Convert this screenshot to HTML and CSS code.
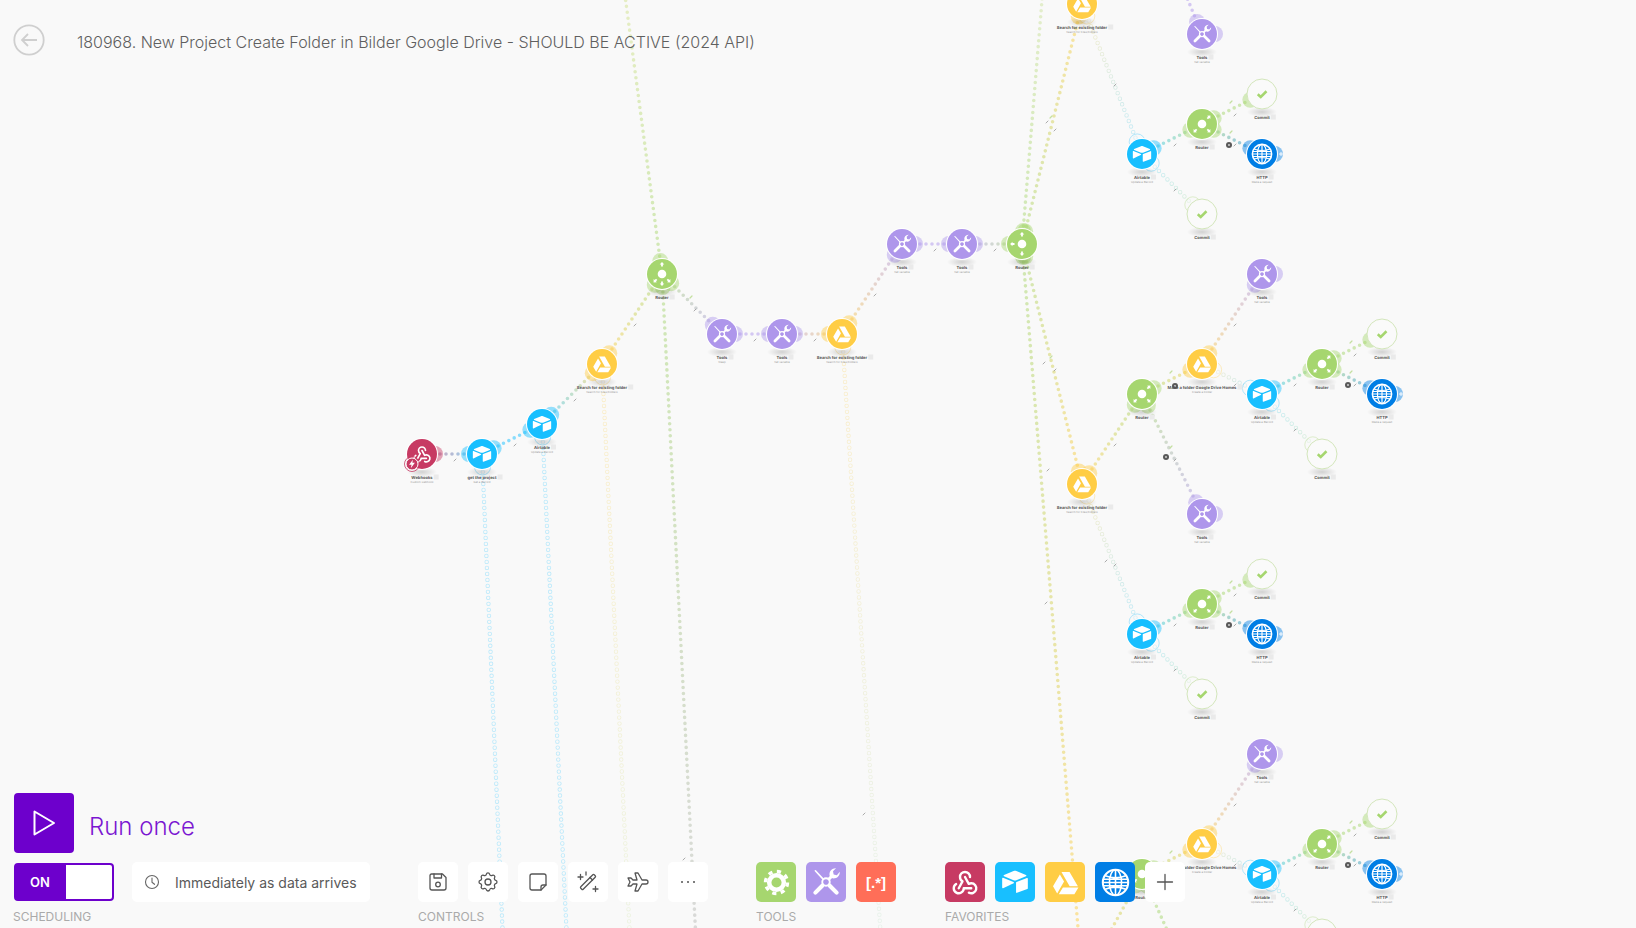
FILE: index.html
```html
<!DOCTYPE html>
<html lang="en">
<head>
    <meta charset="UTF-8">
    <meta name="viewport" content="width=device-width, initial-scale=1.0">
    <title>Scenario editor</title>
    <link rel="stylesheet" href="styles.css">
</head>
<body>
    <svg class="sprites" aria-hidden="true">
        <defs>
            <radialGradient id="shadow">
                <stop offset="0" stop-color="#000" stop-opacity="0.16"></stop>
                <stop offset="1" stop-color="#000" stop-opacity="0"></stop>
            </radialGradient>
            <symbol id="i-drive" viewBox="0 0 24 24">
                <path fill="currentColor" d="M8.4 2.6h7.2L23 15.4h-7.3zM7 4.9.9 15.4l3.7 6.3 6.1-10.5zM9.7 16.4l-3.7 6h13.9l3.6-6z"></path>
            </symbol>
            <symbol id="i-airtable" viewBox="0 0 24 24">
                <path fill="currentColor" d="M10.8 2.6 2.6 6c-.5.2-.5.9 0 1.1l8.2 3.3c.8.3 1.6.3 2.4 0l8.2-3.3c.5-.2.5-.9 0-1.1l-8.2-3.4c-.8-.3-1.6-.3-2.4 0z"></path>
                <path fill="currentColor" d="M12.9 12.6v8.2c0 .4.4.7.8.5l8.9-3.4c.3-.1.4-.3.4-.6V9.1c0-.4-.4-.7-.8-.5l-8.9 3.4c-.2.1-.4.4-.4.6z"></path>
                <path fill="currentColor" d="M10.9 13 8 14.400l-.3.1-5.900 2.800c-.4.2-.8-.1-.8-.5V8.900c0-.2.1-.3.2-.4l.2-.1c.1-.1.3-.1.4 0l8.900 3.500c.4.200.5.800.2 1.100z"></path>
            </symbol>
            <symbol id="i-webhook" viewBox="0 0 24 24">
                <g fill="none" stroke="currentColor" stroke-width="1.9" stroke-linecap="round" stroke-linejoin="round">
                    <path d="M4.900 13.600a4 4 0 1 0 6.100 3.400h6"></path>
                    <path d="M15.100 20.500a4 4 0 1 0 1.900-7.500c-.7 0-1.400.2-2 .5l-3-5.500"></path>
                    <path d="M16 8a4 4 0 1 0-8 0c0 1.500.8 2.800 2 3.500l-3 5.500"></path>
                </g>
            </symbol>
            <symbol id="i-tools" viewBox="0 0 24 24">
                <g fill="none" stroke="currentColor" stroke-linecap="round">
                    <path stroke-width="1.300" d="M3.500 3 9.500 9.500"></path>
                    <path stroke-width="3.300" d="M14.800 14.800 20.500 20.500M9.200 14.800 3.500 20.500"></path>
                    <path stroke-width="2.400" d="M14.500 9.500 17 7"></path>
                    <circle stroke-width="1.500" cx="12" cy="12" r="3"></circle>
                </g>
                <path fill="currentColor" d="M23 3.800a4.800 4.800 0 0 1-6.500 5L15 7.300a4.800 4.800 0 0 1 5-6.300l-2.400 2.400.5 2.600 2.600.5z"></path>
            </symbol>
            <symbol id="i-gear" viewBox="0 0 24 24">
                <g fill="none" stroke="currentColor">
                    <circle stroke-width="4" cx="12" cy="12" r="6.500"></circle>
                    <circle stroke-width="3" cx="12" cy="12" r="9.800" stroke-dasharray="3.700 4"></circle>
                </g>
            </symbol>
            <symbol id="i-globe" viewBox="0 0 24 24">
                <g fill="none" stroke="currentColor" stroke-width="1.300">
                    <circle cx="12" cy="12" r="10.500" stroke-width="1.700"></circle>
                    <ellipse cx="12" cy="12" rx="5" ry="10.500"></ellipse>
                    <path d="M12 1.500v21M1.500 12h21M3.500 6.500c5 2 12 2 17 0M3.500 17.500c5-2 12-2 17 0M1.800 9.300h20.400M1.800 14.700h20.400"></path>
                </g>
            </symbol>
            <symbol id="i-check" viewBox="0 0 24 24">
                <path fill="none" stroke="currentColor" stroke-width="5" d="M3.500 12.500 9.500 18 21 6.500"></path>
            </symbol>
            <symbol id="i-bolt" viewBox="0 0 24 24">
                <path fill="currentColor" d="M14 2 5 14h6l-2 8 10-13h-6z"></path>
            </symbol>
        </defs>
    </svg>

    <main class="scene">
        <svg id="canvas" class="canvas" width="1636" height="928" viewBox="0 0 1636 928"></svg>

        <header class="topbar">
            <button class="back" type="button" aria-label="Back">
                <svg viewBox="0 0 32 32" width="32" height="32">
                    <circle cx="16" cy="16" r="14.700"></circle>
                    <path d="M24 16H9M15 10l-6 6 6 6"></path>
                </svg>
            </button>
            <h1 class="title">180968. New Project Create Folder in Bilder Google Drive - SHOULD BE ACTIVE (2024 API)</h1>
        </header>

        <footer class="toolbar">
            <section class="group group-run">
                <div class="run">
                    <button class="run-btn" type="button" aria-label="Run once">
                        <svg viewBox="0 0 24 28" width="24" height="28"><path d="M2.500 2.500v23L22 14z"></path></svg>
                    </button>
                    <span class="run-text">Run once</span>
                </div>
                <div class="tiles">
                    <div class="toggle"><span class="toggle-on">ON</span><span class="toggle-off"></span></div>
                    <div class="schedule">
                        <svg class="stroke-icon" viewBox="0 0 16 16" width="16" height="16"><circle cx="8" cy="8" r="6.500"></circle><path d="M8 4v4.300l2.500 2"></path></svg>
                        <span>Immediately as data arrives</span>
                    </div>
                </div>
                <div class="group-label">SCHEDULING</div>
            </section>

            <section class="group">
                <div class="tiles">
                    <button class="tile" type="button" aria-label="Save">
                        <svg class="stroke-icon" viewBox="0 0 24 24" width="24" height="24"><path d="M5.500 4h11L20 7.500V18a2 2 0 0 1-2 2H6a2 2 0 0 1-2-2V5.500A1.500 1.500 0 0 1 5.500 4z"></path><path d="M8 4v4h7.500V4"></path><circle cx="12" cy="14.500" r="2.300"></circle></svg>
                    </button>
                    <button class="tile" type="button" aria-label="Settings">
                        <svg class="stroke-icon" viewBox="0 0 24 24" width="24" height="24"><path d="M10.300 4.300c.4-1.800 2.900-1.800 3.400 0a1.700 1.700 0 0 0 2.500 1.100c1.600-.9 3.300.8 2.400 2.400a1.700 1.700 0 0 0 1.100 2.500c1.700.4 1.700 3 0 3.400a1.700 1.700 0 0 0-1.100 2.500c.9 1.600-.8 3.300-2.400 2.400a1.700 1.700 0 0 0-2.500 1.100c-.5 1.700-3 1.700-3.400 0a1.700 1.700 0 0 0-2.500-1.100c-1.600.9-3.300-.8-2.400-2.400a1.700 1.700 0 0 0-1.100-2.500c-1.700-.4-1.700-3 0-3.400a1.700 1.700 0 0 0 1.100-2.500c-.9-1.600.8-3.300 2.400-2.400 1 .6 2.300.1 2.500-1.100z"></path><circle cx="12" cy="12" r="3"></circle></svg>
                    </button>
                    <button class="tile" type="button" aria-label="Notes">
                        <svg class="stroke-icon" viewBox="0 0 24 24" width="24" height="24"><path d="M4 6a2 2 0 0 1 2-2h12a2 2 0 0 1 2 2v9l-5 5H6a2 2 0 0 1-2-2z"></path><path d="M20 15h-3a2 2 0 0 0-2 2v3"></path></svg>
                    </button>
                    <button class="tile" type="button" aria-label="Auto-align">
                        <svg class="stroke-icon" viewBox="0 0 24 24" width="24" height="24"><rect x="10.300" y="2.500" width="3.400" height="19" rx="1" transform="rotate(45 12 12)"></rect><path d="M14 7.500 16.500 10M2 7h5M4.500 4.500v5M17 19h5M19.500 16.500v5M10 2v3"></path></svg>
                    </button>
                    <button class="tile" type="button" aria-label="Explain flow">
                        <svg class="stroke-icon" viewBox="0 0 24 24" width="24" height="24"><path d="M16 10h4a2 2 0 0 1 0 4h-4l-4 7H9l2-7H7l-2 2H2l2-4-2-4h3l2 2h4L9 3h3z"></path></svg>
                    </button>
                    <button class="tile" type="button" aria-label="More">
                        <svg class="stroke-icon" viewBox="0 0 24 24" width="24" height="24"><path class="dots" d="M6 12h.01M12 12h.01M18 12h.01"></path></svg>
                    </button>
                </div>
                <div class="group-label">CONTROLS</div>
            </section>

            <section class="group">
                <div class="tiles">
                    <button class="tile tile-router" type="button" aria-label="Flow control"><svg class="glyph" width="27" height="27"><use href="#i-gear"></use></svg></button>
                    <button class="tile tile-tools" type="button" aria-label="Tools"><svg class="glyph" width="30" height="30"><use href="#i-tools"></use></svg></button>
                    <button class="tile tile-json" type="button" aria-label="Text parser">[.*]</button>
                </div>
                <div class="group-label">TOOLS</div>
            </section>

            <section class="group group-fav">
                <div class="tiles">
                    <button class="tile tile-webhook" type="button" aria-label="Webhooks"><svg class="glyph" width="30" height="30"><use href="#i-webhook"></use></svg></button>
                    <button class="tile tile-airtable" type="button" aria-label="Airtable"><svg class="glyph" width="28" height="28"><use href="#i-airtable"></use></svg></button>
                    <button class="tile tile-drive" type="button" aria-label="Google Drive"><svg class="glyph" width="27" height="27"><use href="#i-drive"></use></svg></button>
                    <button class="tile tile-http" type="button" aria-label="HTTP"><svg class="glyph" width="29" height="29"><use href="#i-globe"></use></svg></button>
                    <button class="tile" type="button" aria-label="Add">
                        <svg class="stroke-icon" viewBox="0 0 24 24" width="24" height="24"><path d="M12 4.500v15M4.500 12h15"></path></svg>
                    </button>
                </div>
                <div class="group-label">FAVORITES</div>
            </section>
        </footer>
    </main>

    <script src="script.js"></script>
</body>
</html>
```

FILE: styles.css
```css
* {
    box-sizing: border-box;
}
html, body {
    margin: 0;
    padding: 0;
    height: 100%;
    overflow: hidden;
}
body {
    font-family: Inter, "Noto Sans", sans-serif;
    background-color: #f9f9f9;
    color: #555;
}
button {
    font-family: inherit;
    border: none;
    padding: 0;
    cursor: pointer;
}
.sprites {
    position: absolute;
    width: 0;
    height: 0;
}
.scene {
    position: relative;
    height: 100vh;
    overflow: hidden;
}
.canvas {
    position: absolute;
    left: 0;
    top: 0;
    text-rendering: geometricPrecision;
}

/* header */
.topbar {
    position: absolute;
    left: 13px;
    top: 24px;
    display: flex;
    align-items: center;
    gap: 32px;
}
.back {
    width: 32px;
    height: 32px;
    background: none;
    display: flex;
}
.back circle, .back path {
    fill: none;
    stroke: #cfcfcf;
    stroke-width: 1.8;
}
.title {
    margin: 3px 0 0;
    font-size: 16px;
    font-weight: 300;
    color: #5f5f5f;
    white-space: nowrap;
}

/* bottom bar */
.toolbar {
    position: absolute;
    left: 14px;
    bottom: 4px;
    display: flex;
    align-items: flex-end;
    gap: 48px;
}
.group-fav {
    margin-left: 1px;
}
.run {
    display: flex;
    align-items: center;
    gap: 15px;
    margin-bottom: 9px;
}
.run-btn {
    width: 60px;
    height: 60px;
    background: #6d00cc;
    border-radius: 4px;
    display: flex;
    align-items: center;
    justify-content: center;
}
.run-btn path {
    fill: none;
    stroke: #fff;
    stroke-width: 2;
    stroke-linejoin: round;
}
.run-text {
    font-size: 24px;
    font-weight: 300;
    color: #7b16d1;
    margin-top: 6px;
}
.tiles {
    display: flex;
    align-items: center;
    gap: 10px;
}
.toggle {
    display: flex;
    width: 100px;
    height: 38px;
    border: 2px solid #6d00cc;
    border-radius: 4px;
    background: #fff;
    margin-right: 8px;
}
.toggle-on {
    width: 50px;
    background: #6d00cc;
    color: #fff;
    font-size: 13px;
    font-weight: 600;
    display: flex;
    align-items: center;
    justify-content: center;
    padding-right: 2px;
}
.schedule {
    width: 238px;
    height: 40px;
    background: #fff;
    border-radius: 5px;
    padding-left: 12px;
    display: flex;
    align-items: center;
    gap: 15px;
    font-size: 14px;
    color: #5a5a5a;
    white-space: nowrap;
}
.tile {
    width: 40px;
    height: 40px;
    border-radius: 5px;
    background: #fff;
    display: flex;
    align-items: center;
    justify-content: center;
    color: #fff;
}
.tile-router { background: #a6d66f; }
.tile-tools { background: #ae96eb; }
.tile-json {
    background: #ff6e58;
    font-family: "Liberation Sans", sans-serif;
    font-weight: 700;
    font-size: 15px;
}
.tile-webhook { background: #c73a63; }
.tile-airtable { background: #18bfff; }
.tile-drive { background: #ffcd45; }
.tile-http { background: #007ee5; }
.stroke-icon {
    fill: none;
    stroke: #555;
    stroke-width: 1.3;
    stroke-linecap: round;
    stroke-linejoin: round;
}
.stroke-icon .dots {
    stroke-width: 2;
}
.schedule .stroke-icon {
    stroke: #666;
    stroke-width: 1.1;
}
.group-label {
    margin-top: 7px;
    font-size: 12px;
    line-height: 15px;
    color: #aaa;
}
.group-run .group-label {
    margin-left: -1px;
}

/* diagram */
.link {
    fill: none;
    stroke-width: 3.6;
    stroke-linecap: round;
    stroke-dasharray: 0 6;
    opacity: 0.5;
}
.link-hollow {
    stroke-width: 4.4;
    opacity: 0.28;
}
.link-hole {
    fill: none;
    stroke: #f9f9f9;
    stroke-width: 2.8;
    stroke-linecap: round;
    stroke-dasharray: 0 6;
}
.handle {
    opacity: 0.45;
}
.handle-hollow {
    opacity: 0.4;
    fill: #f9f9f9;
    stroke-width: 0.8;
}
.node-ring {
    fill: #fff;
}
.commit-disc {
    fill: #fafafa;
    stroke: #d3e6bb;
    stroke-width: 1;
}
.node-icon {
    color: #fff;
}
.commit-icon {
    color: #a6d66f;
}
.router-hub {
    fill: #fff;
}
.node-title {
    font-size: 4.1px;
    font-weight: 700;
    fill: #555;
    text-anchor: middle;
}
.node-sub {
    font-size: 2.8px;
    fill: #999;
    text-anchor: middle;
}
.node-badge {
    fill: #eaeaea;
}
.tick {
    stroke: #888;
    stroke-width: 0.7;
    stroke-linecap: round;
}
.tick-filter {
    stroke: #c4e0a0;
    stroke-width: 1.2;
}
.filter-dot {
    fill: #595959;
}
.filter-eye {
    fill: #ddd;
}
.bolt-disc {
    fill: #c73a63;
    stroke: #fff;
    stroke-width: 1;
}
.bolt-ring {
    fill: none;
    stroke: #c73a63;
    stroke-width: 0.8;
}
.plus {
    stroke: #fff;
    stroke-width: 0.9;
}
```

FILE: script.js
```js
const NS = 'http://www.w3.org/2000/svg';
const canvas = document.getElementById('canvas');

const COLORS = {
    webhook: '#c73a63',
    airtable: '#18bfff',
    drive: '#ffcd45',
    router: '#a6d66f',
    tools: '#ae96eb',
    http: '#007ee5',
    commit: '#a6d66f'
};
const ICONS = { webhook: 'i-webhook', airtable: 'i-airtable', drive: 'i-drive', tools: 'i-tools', http: 'i-globe' };
const ICON_SIZE = { webhook: 21, airtable: 20, drive: 19, tools: 20, http: 22 };

const FOLDER = 'Search for existing folder';
const FILES = 'Search for Files/Folders';

// id: [type, x, y, title, subtitle]
const nodes = {
    hook: ['webhook', 422, 454, 'Webhooks', 'Custom webhook'],
    get: ['airtable', 482, 454, 'get the project', 'Get a Record'],
    air1: ['airtable', 542, 424, 'Airtable', 'Update a Record'],
    s1: ['drive', 602, 364, FOLDER, FILES],
    r1: ['router', 662, 274, 'Router', ''],
    t1: ['tools', 722, 334, 'Tools', 'Sleep'],
    t2: ['tools', 782, 334, 'Tools', 'Set variable'],
    s2: ['drive', 842, 334, FOLDER, FILES],
    t3: ['tools', 902, 244, 'Tools', 'Set variable'],
    t4: ['tools', 962, 244, 'Tools', 'Set variable'],
    r2: ['router', 1022, 244, 'Router', ''],

    s3: ['drive', 1082, 4, FOLDER, FILES],
    t5: ['tools', 1202, 34, 'Tools', 'Set variable'],
    a3: ['airtable', 1142, 154, 'Airtable', 'Update a Record'],
    r3: ['router', 1202, 124, 'Router', ''],
    c3a: ['commit', 1262, 94, 'Commit', ''],
    h3: ['http', 1262, 154, 'HTTP', 'Make a request'],
    c3b: ['commit', 1202, 214, 'Commit', ''],

    s4: ['drive', 1082, 484, FOLDER, FILES],
    r4: ['router', 1142, 394, 'Router', ''],
    d4: ['drive', 1202, 364, 'Make a folder Google Drive Homes', 'Create a Folder'],
    t6: ['tools', 1262, 274, 'Tools', 'Set variable'],
    t7: ['tools', 1202, 514, 'Tools', 'Set variable'],
    a4: ['airtable', 1262, 394, 'Airtable', 'Update a Record'],
    r5: ['router', 1322, 364, 'Router', ''],
    c5a: ['commit', 1382, 334, 'Commit', ''],
    h5: ['http', 1382, 394, 'HTTP', 'Make a request'],
    c5b: ['commit', 1322, 454, 'Commit', ''],

    a6: ['airtable', 1142, 634, 'Airtable', 'Update a Record'],
    r6: ['router', 1202, 604, 'Router', ''],
    c6a: ['commit', 1262, 574, 'Commit', ''],
    h6: ['http', 1262, 634, 'HTTP', 'Make a request'],
    c6b: ['commit', 1202, 694, 'Commit', ''],

    r7: ['router', 1142, 874, 'Router', ''],
    d7: ['drive', 1202, 844, 'Make a folder Google Drive Homes', 'Create a Folder'],
    t8: ['tools', 1262, 754, 'Tools', 'Set variable'],
    a7: ['airtable', 1262, 874, 'Airtable', 'Update a Record'],
    r8: ['router', 1322, 844, 'Router', ''],
    c8a: ['commit', 1382, 814, 'Commit', ''],
    h8: ['http', 1382, 874, 'HTTP', 'Make a request'],
    // below the fold, only its top edge shows
    c8b: ['commit', 1322, 934, '', '']
};

// from, to, hollow
const links = [
    ['hook', 'get'], ['get', 'air1'], ['air1', 's1'], ['s1', 'r1'], ['r1', 't1'], ['t1', 't2'],
    ['t2', 's2'], ['s2', 't3'], ['t3', 't4'], ['t4', 'r2'], ['r2', 's3'],
    ['s3', 'a3', true], ['a3', 'r3'], ['r3', 'c3a'], ['r3', 'h3'], ['a3', 'c3b', true],
    ['r2', 's4'], ['s4', 'r4'], ['r4', 'd4'], ['d4', 't6'], ['d4', 'a4', true], ['r4', 't7'],
    ['a4', 'r5'], ['r5', 'c5a'], ['r5', 'h5'], ['a4', 'c5b', true],
    ['s4', 'a6', true], ['a6', 'r6'], ['r6', 'c6a'], ['r6', 'h6'], ['a6', 'c6b', true],
    ['r7', 'd7'], ['d7', 't8'], ['d7', 'a7', true], ['a7', 'r8'], ['r8', 'c8a'], ['r8', 'h8'], ['a7', 'c8b', true]
];

// links that run off the canvas: from, x, y, colour at the far end, hollow
const strays = [
    ['r1', 624, -12, '#d4e28f'],
    ['r1', 696, 940, '#b9b9b9'],
    ['get', 503, 940, '#18bfff', true],
    ['air1', 567, 940, '#18bfff', true],
    ['s1', 630, 940, '#c8e2a0', true],
    ['s2', 881, 940, '#b9e0c8', true],
    ['r2', 1043, -12, '#cfe3a0'],
    ['r2', 1079, 940, '#ffcd45']
];
const inbound = [
    [1183, -12, 't5', '#ae96eb'],
    [1100, 950, 'r7', '#ffcd45'],
    [1176, 950, 'r7', '#a6d66f']
];

const filterDots = [[1229, 145], [1175, 386], [1348, 385], [1166, 457], [1229, 625], [1348, 865]];
const strayTicks = [[1047, 122], [1046, 603], [1044, 363], [864, 814], [684, 859], [1106, 561], [1048, 470]];
const endHandles = ['t5', 't6', 't7', 't8', 'h3', 'h5', 'h6', 'h8'];

const layers = {};
['links', 'handles', 'marks', 'nodes'].forEach(name => {
    layers[name] = make('g', {}, canvas);
});
const defs = make('defs', {}, canvas);
let gradientCount = 0;
const routerDirs = {};

function make(tag, attrs, parent) {
    const el = document.createElementNS(NS, tag);
    Object.keys(attrs).forEach(key => el.setAttribute(key, attrs[key]));
    if (parent) parent.appendChild(el);
    return el;
}

function drawLine(x1, y1, x2, y2, c1, c2, hollow) {
    const id = 'g' + gradientCount++;
    const gradient = make('linearGradient', { id, gradientUnits: 'userSpaceOnUse', x1, y1, x2, y2 }, defs);
    make('stop', { offset: 0, 'stop-color': c1 }, gradient);
    make('stop', { offset: 1, 'stop-color': c2 }, gradient);
    const path = `M${x1} ${y1}L${x2} ${y2}`;
    make('path', { d: path, class: hollow ? 'link link-hollow' : 'link', stroke: `url(#${id})` }, layers.links);
    if (hollow) make('path', { d: path, class: 'link-hole' }, layers.links);
}

function drawHandle(id, toX, toY, hollow) {
    const [type, x, y] = nodes[id];
    const angle = Math.atan2(toY - y, toX - x);
    const cx = x + Math.cos(angle) * 13;
    const cy = y + Math.sin(angle) * 13;
    if (hollow) {
        make('circle', { cx, cy, r: 8, class: 'handle-hollow', stroke: COLORS[type] }, layers.handles);
    } else {
        make('circle', { cx, cy, r: 8, class: 'handle', fill: COLORS[type] }, layers.handles);
    }
    if (type === 'router') {
        const dirs = routerDirs[id] || (routerDirs[id] = new Set());
        dirs.add(Math.round(angle / (Math.PI / 4)) * 45);
    }
}

function drawTick(x, y, cls) {
    make('path', { d: `M${x - 1} ${y + 1}L${x + 1} ${y - 1}`, class: cls || 'tick' }, layers.marks);
}

links.forEach(([from, to, hollow]) => {
    const a = nodes[from];
    const b = nodes[to];
    drawLine(a[1], a[2], b[1], b[2], COLORS[a[0]], COLORS[b[0]], hollow);
    drawHandle(from, b[1], b[2], hollow);
    drawHandle(to, a[1], a[2], hollow);
    drawTick((a[1] + b[1]) / 2 + 3, (a[2] + b[2]) / 2 + 6);
    if (a[0] === 'router') {
        drawTick((a[1] + b[1]) / 2 - 1, (a[2] + b[2]) / 2 - 7, 'tick tick-filter');
    }
});

strays.forEach(([from, x, y, color, hollow]) => {
    const a = nodes[from];
    drawLine(a[1], a[2], x, y, COLORS[a[0]], color, hollow);
    drawHandle(from, x, y, hollow);
});

inbound.forEach(([x, y, to, color]) => {
    const b = nodes[to];
    drawLine(x, y, b[1], b[2], color, COLORS[b[0]]);
    drawHandle(to, x, y);
});

strayTicks.forEach(([x, y]) => drawTick(x, y));

endHandles.forEach(id => {
    const [type, x, y] = nodes[id];
    drawHandle(id, x + 10, y);
    if (type === 'http') {
        make('path', { d: `M${x + 17} ${y}h4M${x + 19} ${y - 2}v4`, class: 'plus' }, layers.handles);
    }
});

filterDots.forEach(([x, y]) => {
    make('circle', { cx: x, cy: y, r: 3, class: 'filter-dot' }, layers.marks);
    make('circle', { cx: x, cy: y, r: 0.9, class: 'filter-eye' }, layers.marks);
});

Object.keys(nodes).forEach(id => {
    const [type, x, y, title, sub] = nodes[id];
    const g = make('g', {}, layers.nodes);
    make('ellipse', { cx: x, cy: y + 18, rx: 15, ry: 5, fill: 'url(#shadow)' }, g);

    if (type === 'commit') {
        make('circle', { cx: x, cy: y, r: 15, class: 'commit-disc' }, g);
        make('use', { href: '#i-check', x: x - 6, y: y - 6, width: 12, height: 12, class: 'commit-icon' }, g);
    } else {
        make('circle', { cx: x, cy: y, r: 16, class: 'node-ring' }, g);
        make('circle', { cx: x, cy: y, r: 15, fill: COLORS[type] }, g);
    }

    if (type === 'router') {
        make('circle', { cx: x, cy: y, r: 4.3, class: 'router-hub' }, g);
        (routerDirs[id] || []).forEach(deg => {
            make('path', {
                d: 'M7.500 -.9h2v-1.400l2.400 2.300-2.400 2.300v-1.400h-2z',
                class: 'router-hub',
                transform: `translate(${x} ${y}) rotate(${deg})`
            }, g);
        });
    } else if (ICONS[type]) {
        const size = ICON_SIZE[type];
        make('use', { href: '#' + ICONS[type], x: x - size / 2, y: y - size / 2, width: size, height: size, class: 'node-icon' }, g);
    }

    if (title) {
        const label = make('text', { x, y: y + 24.5, class: 'node-title' }, g);
        label.textContent = title;
        const half = label.getComputedTextLength() / 2;
        make('rect', { x: x + half + 1, y: y + 20.5, width: 5, height: 5, class: 'node-badge' }, g);
    }
    if (sub) {
        const subLabel = make('text', { x, y: y + 28.5, class: 'node-sub' }, g);
        subLabel.textContent = sub;
    }
});

// trigger badge on the first module
const bolt = make('g', {}, layers.nodes);
make('circle', { cx: 412, cy: 464, r: 7.5, class: 'bolt-ring' }, bolt);
make('circle', { cx: 412, cy: 464, r: 6, class: 'bolt-disc' }, bolt);
make('use', { href: '#i-bolt', x: 407, y: 459, width: 10, height: 10, class: 'node-icon' }, bolt);
```
